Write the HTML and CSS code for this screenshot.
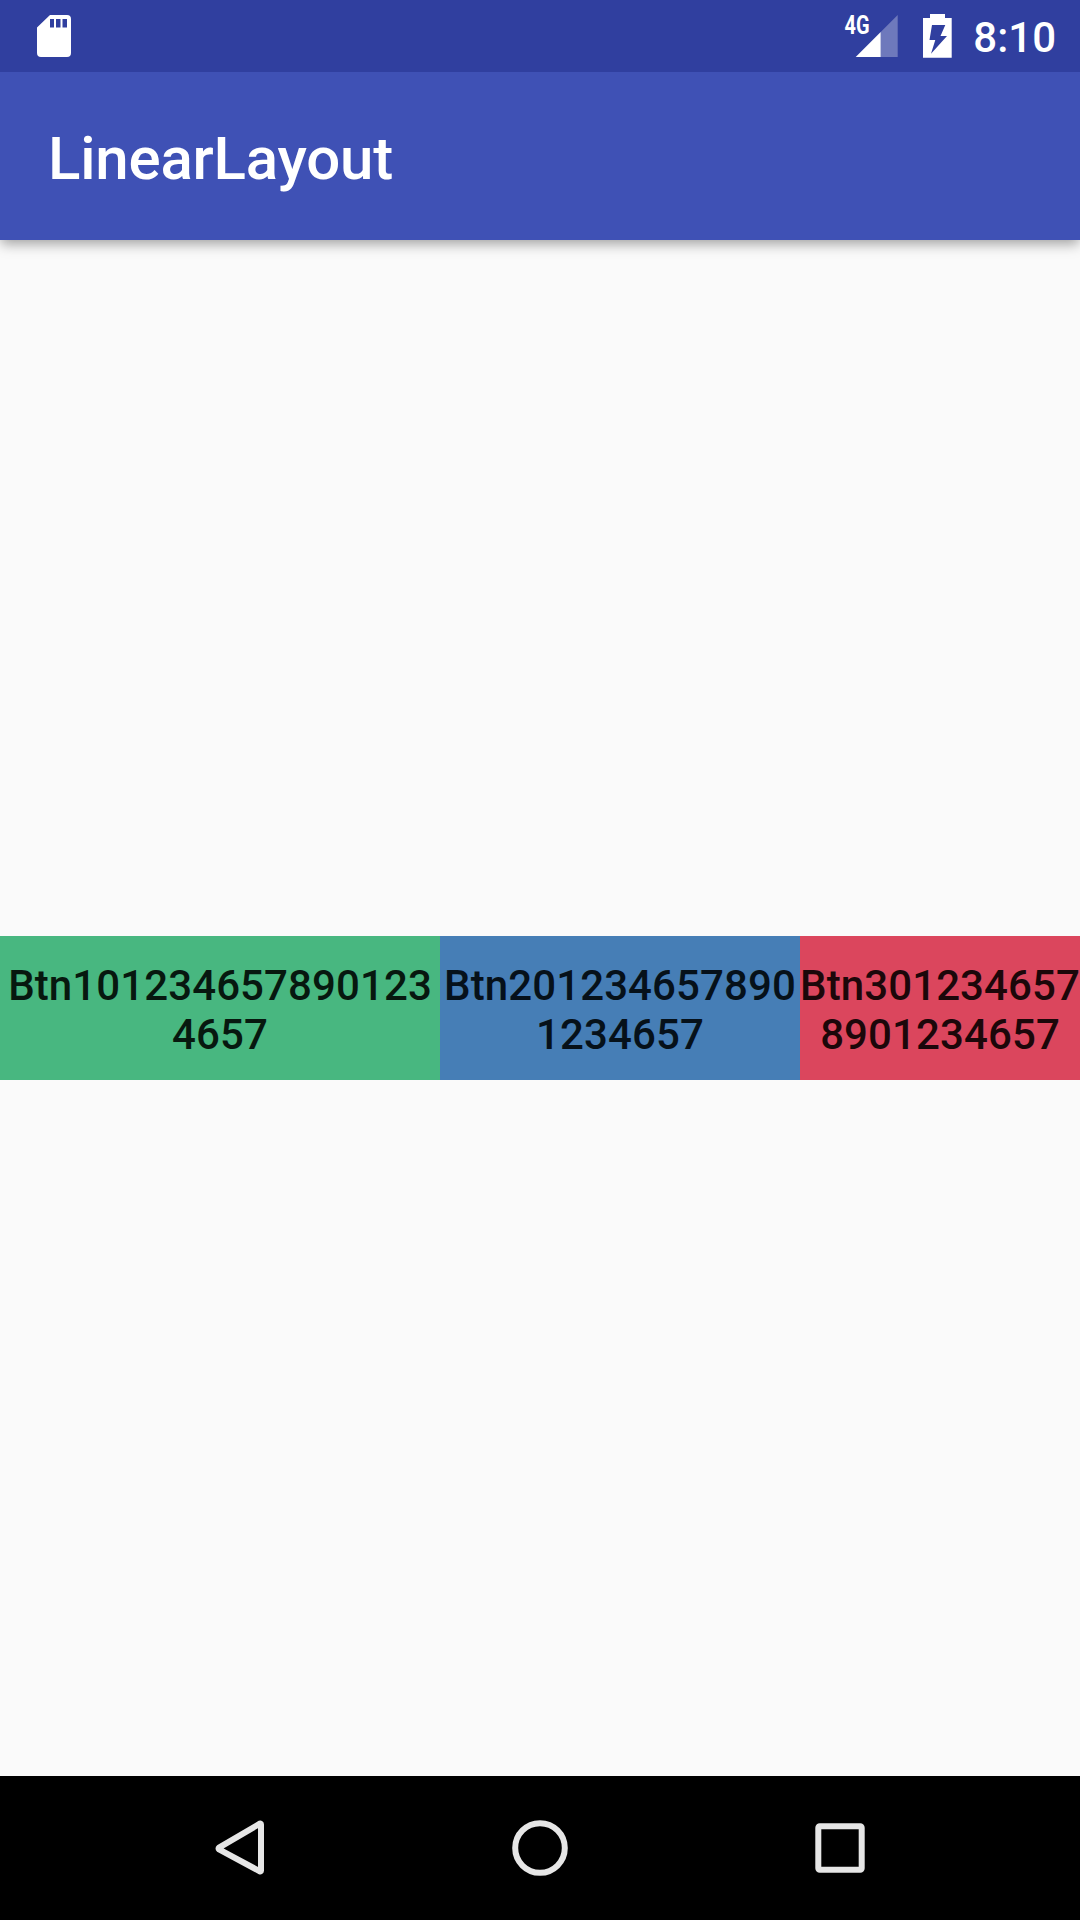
FILE: index.html
```html
<!DOCTYPE html>
<html lang="en">
<head>
<meta charset="utf-8">
<title>LinearLayout</title>
<link rel="stylesheet" href="styles.css">
</head>
<body>
<div class="screen">
  <header class="status-bar">
    <svg class="sd-card" viewBox="0 0 34 42" aria-hidden="true">
      <path fill="#fff" fill-rule="evenodd" d="M13 0H30Q34 0 34 4V38Q34 42 30 42H4Q0 42 0 38V12.5ZM13 4V12.5H17V4ZM19 4V12.5H23.5V4ZM25.5 4V12.5H30V4Z"/>
    </svg>
    <div class="status-icons">
      <svg class="signal" viewBox="0 0 54 50" aria-hidden="true">
        <text class="network" x="0.5" y="25.5" textLength="25" lengthAdjust="spacingAndGlyphs">4G</text>
        <path fill="#fff" fill-opacity=".3" d="M36.7 24L53.7 7V49H36.7Z"/>
        <path fill="#fff" d="M11.7 49L36.7 24V49Z"/>
      </svg>
      <svg class="battery" viewBox="0 0 29 44" aria-hidden="true">
        <path fill="#fff" fill-rule="evenodd" d="M7 0H22V4H28.7V43.7H0V4H7ZM9 11L6.5 26H12.3L8 39.8L24 22H17.5L22.3 11Z"/>
      </svg>
      <span class="clock">8:10</span>
    </div>
  </header>
  <div class="app-bar"><h1 class="title">LinearLayout</h1></div>
  <main class="content">
    <div class="button-row">
      <button class="btn green">Btn101234657890123<br>4657</button>
      <button class="btn blue">Btn201234657890<br>1234657</button>
      <button class="btn red">Btn301234657<br>8901234657</button>
    </div>
  </main>
  <nav class="nav-bar">
    <svg class="nav-icon" viewBox="0 0 60 60" aria-label="Back"><path d="M9 30.2L49.8 6.2Q51 5.8 51 7V53Q51 54.2 49.8 53.8L9 31.8Q8 31 9 30.2Z" transform="translate(0 -.5)"/></svg>
    <svg class="nav-icon" viewBox="0 0 60 60" aria-label="Home"><circle cx="30" cy="30" r="24.8"/></svg>
    <svg class="nav-icon" viewBox="0 0 60 60" aria-label="Recent apps"><rect x="8.3" y="8.3" width="43.4" height="43.4" rx="1.5"/></svg>
  </nav>
</div>
</body>
</html>
```
FILE: styles.css
```css
* { box-sizing: border-box; }
body { margin: 0; font-family: Roboto, sans-serif; font-weight: 500; }
.screen { display: flex; flex-direction: column; width: 1080px; height: 1920px; background: #fafafa; overflow: hidden; }
.status-bar { position: relative; z-index: 1; display: flex; justify-content: space-between; align-items: flex-start; height: 72px; padding: 0 24px 0 37px; background: #303f9f; }
.sd-card { width: 34px; height: 42px; margin-top: 15px; }
.status-icons { display: flex; align-items: flex-start; }
.signal { width: 54px; height: 50px; margin-top: 8px; overflow: visible; }
.network { font-size: 25.5px; font-weight: 700; fill: #fff; }
.battery { width: 29px; height: 44px; margin: 14px 0 0 25px; }
.clock { margin-left: 21px; font-size: 42px; line-height: 49px; padding-top: 13px; color: #fff; }
.app-bar { display: flex; align-items: center; height: 168px; padding: 5px 0 0 48px; background: #3f51b5; box-shadow: 0 5px 12px -1px rgba(0, 0, 0, .36); }
.title { margin: 0; font-size: 60px; line-height: 70px; font-weight: 500; letter-spacing: -.2px; color: #fff; }
.content { flex: 1; display: flex; align-items: center; }
.button-row { display: grid; grid-template-columns: 440px 360px 280px; height: 144px; width: 100%; }
.btn { padding: 4px 0 0; border: 0; font: 500 42px/49px Roboto, sans-serif; letter-spacing: .1px; white-space: nowrap; text-align: center; }
.green { background: #48b780; color: #07180f; }
.blue { background: #467eb6; color: #06111a; }
.red { background: #db465d; color: #1c070a; }
.nav-bar { display: flex; justify-content: center; align-items: center; gap: 240px; height: 144px; background: #000; }
.nav-icon { width: 60px; height: 60px; fill: none; stroke: #e6e6e6; stroke-width: 6; stroke-linejoin: round; }
```
